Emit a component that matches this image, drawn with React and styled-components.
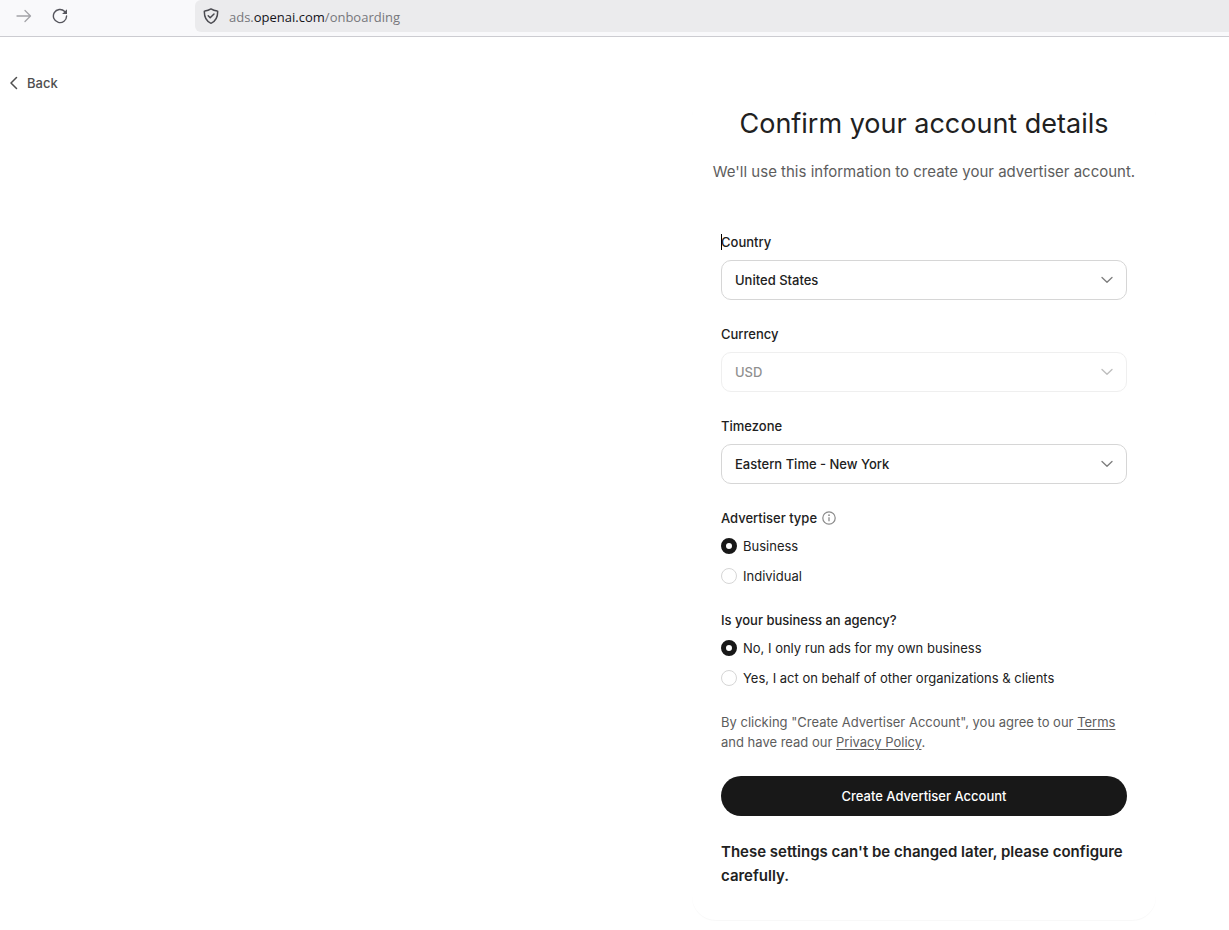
import React, { useState } from "react";
import styled, { createGlobalStyle } from "styled-components";

const GlobalStyle = createGlobalStyle`
  * {
    box-sizing: border-box;
  }
  body {
    margin: 0;
    background: #fff;
    color: #212121;
    font-family: Inter, "Liberation Sans", sans-serif;
    font-size: 13px;
    line-height: 20px;
  }
`;

const ArrowIcon = () => (
  <svg width="16" height="16" viewBox="0 0 16 16" fill="none" stroke="#a3a3a8" strokeWidth="1.3">
    <path d="M1 8h13.5M9 2.5 14.5 8 9 13.5" strokeLinecap="round" strokeLinejoin="round" />
  </svg>
);

const ReloadIcon = () => (
  <svg width="16" height="16" viewBox="0 0 16 16" fill="none">
    <path
      d="M12.7 3.4A6.6 6.6 0 1 0 14.6 8"
      stroke="#55555c"
      strokeWidth="1.4"
      strokeLinecap="round"
    />
    <path d="M15 1.2v4.9h-4.9z" fill="#55555c" />
  </svg>
);

const ShieldIcon = () => (
  <svg width="16" height="16" viewBox="0 0 16 16" fill="none" stroke="#4a4a50" strokeWidth="1.5">
    <path
      d="M8 .9c2 1.2 4.1 1.8 6.2 2.1.3 0 .5.3.5.6 0 5.4-1.7 9.400-6.300 11.500a1 1 0 0 1-.8 0C3 13 1.300 9 1.300 3.600c0-.3.2-.6.5-.6C3.900 2.700 6 2.100 8 .9z"
      strokeLinejoin="round"
    />
    <path d="M5.2 7.8 7.2 9.8 11 6" strokeLinecap="round" strokeLinejoin="round" />
  </svg>
);

const ChevronLeft = () => (
  <svg width="8" height="14" viewBox="0 0 8 14" fill="none" stroke="#4f4f4f" strokeWidth="1.5">
    <path d="M6.5 1.5 1 7l5.500 5.500" strokeLinecap="round" strokeLinejoin="round" />
  </svg>
);

const ChevronDown = () => (
  <svg width="12" height="8" viewBox="0 0 12 8" fill="none" stroke="#7d7d7d" strokeWidth="1.3">
    <path d="M1 1.5 6 6.3 11 1.5" strokeLinecap="round" strokeLinejoin="round" />
  </svg>
);

const InfoIcon = () => (
  <svg width="14" height="14" viewBox="0 0 14 14" fill="none">
    <circle cx="7" cy="7" r="6.2" stroke="#8a8a8a" strokeWidth="1.2" />
    <path d="M7 6.3v4" stroke="#8a8a8a" strokeWidth="1.3" />
    <circle cx="7" cy="4.2" r=".9" fill="#8a8a8a" />
  </svg>
);

const SelectField = ({ id, label, options, disabled, caret }) => (
  <Field>
    <Label htmlFor={id}>
      {caret && <Caret />}
      {label}
    </Label>
    <SelectWrapper $disabled={disabled}>
      <select id={id} disabled={disabled}>
        {options.map((item) => (
          <option key={item}>{item}</option>
        ))}
      </select>
      <ChevronDown />
    </SelectWrapper>
  </Field>
);

const RadioField = ({ name, label, info, options, value, onChange }) => (
  <RadioGroup>
    <Legend>
      {label}
      {info && <InfoIcon />}
    </Legend>
    <RadioList>
      {options.map((item) => (
        <RadioLabel key={item}>
          <Radio
            type="radio"
            name={name}
            checked={value === item}
            onChange={() => onChange(item)}
          />
          {item}
        </RadioLabel>
      ))}
    </RadioList>
  </RadioGroup>
);

const types = ["Business", "Individual"];
const agencyAnswers = [
  "No, I only run ads for my own business",
  "Yes, I act on behalf of other organizations & clients",
];

const App = () => {
  const [type, setType] = useState(types[0]);
  const [agency, setAgency] = useState(agencyAnswers[0]);

  return (
    <>
      <GlobalStyle />
      <Toolbar>
        <ToolButton aria-label="Forward" disabled>
          <ArrowIcon />
        </ToolButton>
        <ToolButton aria-label="Reload">
          <ReloadIcon />
        </ToolButton>
        <AddressBar>
          <ShieldIcon />
          <Address>
            ads.<b>openai.com</b>/onboarding
          </Address>
        </AddressBar>
      </Toolbar>
      <TopNav>
        <BackLink href="#">
          <ChevronLeft />
          Back
        </BackLink>
      </TopNav>
      <Main>
        <Card>
          <Title>Confirm your account details</Title>
          <Subtitle>We'll use this information to create your advertiser account.</Subtitle>
          <Form onSubmit={(e) => e.preventDefault()}>
            <SelectField id="country" label="Country" options={["United States"]} caret />
            <SelectField id="currency" label="Currency" options={["USD"]} disabled />
            <SelectField id="timezone" label="Timezone" options={["Eastern Time - New York"]} />
            <RadioField
              name="type"
              label="Advertiser type"
              info
              options={types}
              value={type}
              onChange={setType}
            />
            <RadioField
              name="agency"
              label="Is your business an agency?"
              options={agencyAnswers}
              value={agency}
              onChange={setAgency}
            />
            <Legal>
              By clicking "Create Advertiser Account", you agree to our <a href="#">Terms</a> and
              have read our <a href="#">Privacy Policy</a>.
            </Legal>
            <SubmitButton type="submit">Create Advertiser Account</SubmitButton>
            <Note>These settings can't be changed later, please configure carefully.</Note>
          </Form>
        </Card>
      </Main>
    </>
  );
};

const Toolbar = styled.header`
  display: flex;
  align-items: flex-start;
  height: 37px;
  padding-left: 6px;
  background: #f9f9fb;
  border-bottom: 1px solid #ccccd1;
`;

const ToolButton = styled.button`
  display: flex;
  align-items: center;
  justify-content: center;
  width: 36px;
  height: 32px;
  padding: 0;
  border: 0;
  background: transparent;
`;

const AddressBar = styled.div`
  display: flex;
  flex: 1;
  align-items: center;
  gap: 10px;
  height: 32px;
  margin-left: 117px;
  padding-left: 8px;
  border-radius: 6px 0 0 6px;
  background: #ebebed;
`;

const Address = styled.span`
  padding-top: 2px;
  color: #77777c;
  font-family: "Open Sans", "Noto Sans", sans-serif;
  font-size: 13px;
  b {
    color: #15141a;
    font-weight: 400;
  }
`;

const TopNav = styled.nav`
  display: flex;
  padding: 36px 10px 0;
`;

const BackLink = styled.a`
  display: flex;
  align-items: center;
  gap: 9px;
  color: #4f4f4f;
  font-weight: 500;
  text-decoration: none;
`;

const Main = styled.main`
  display: flex;
  justify-content: flex-end;
  padding: 0 73px 10px 10px;
`;

const Card = styled.section`
  width: 100%;
  max-width: 464px;
  padding: 13px 0 32px;
  border-radius: 24px;
  box-shadow: 0 1px 1px rgba(0, 0, 0, 0.03);
`;

const Title = styled.h1`
  margin: 0;
  font-size: 27px;
  font-weight: 400;
  line-height: 36px;
  text-align: center;
`;

const Subtitle = styled.p`
  margin: 18px 0 48px;
  color: #5d5d5d;
  font-size: 15px;
  line-height: 24px;
  text-align: center;
`;

const Form = styled.form`
  display: flex;
  flex-direction: column;
  gap: 24px;
  margin: 0 29px;
`;

const Field = styled.div`
  display: flex;
  flex-direction: column;
  gap: 8px;
`;

const Label = styled.label`
  position: relative;
  font-weight: 500;
`;

const Caret = styled.span`
  position: absolute;
  top: 2px;
  left: 0;
  width: 1px;
  height: 16px;
  background: #000;
`;

const SelectWrapper = styled.div`
  position: relative;
  opacity: ${(props) => (props.$disabled ? 0.5 : 1)};
  select {
    width: 100%;
    height: 40px;
    padding: 0 40px 0 13px;
    appearance: none;
    border: 1px solid ${(props) => (props.$disabled ? "#e0e0e0" : "#d6d6d6")};
    border-radius: 10px;
    background: #fff;
    color: #212121;
    font: inherit;
    font-weight: 500;
    opacity: 1;
  }
  svg {
    position: absolute;
    top: 16px;
    right: 14px;
    pointer-events: none;
  }
`;

const RadioGroup = styled.fieldset`
  min-width: 0;
  margin: 0;
  padding: 0;
  border: 0;
`;

const Legend = styled.legend`
  display: flex;
  align-items: center;
  gap: 5px;
  margin-bottom: 8px;
  padding: 0;
  font-weight: 500;
`;

const RadioList = styled.div`
  display: flex;
  flex-direction: column;
  gap: 10px;
`;

const RadioLabel = styled.label`
  display: flex;
  align-items: center;
  gap: 6px;
`;

const Radio = styled.input`
  width: 16px;
  height: 16px;
  margin: 0;
  appearance: none;
  border: 1px solid #d6d6d6;
  border-radius: 50%;
  background: #fff;
  &:checked {
    border: 5px solid #181818;
  }
`;

const Legal = styled.p`
  margin: 0;
  color: #5d5d5d;
  a {
    color: inherit;
    text-underline-offset: 2px;
  }
`;

const SubmitButton = styled.button`
  height: 40px;
  border: 0;
  border-radius: 20px;
  background: #181818;
  color: #fff;
  font: inherit;
  font-weight: 500;
`;

const Note = styled.p`
  margin: 0;
  font-size: 15px;
  font-weight: 600;
  line-height: 24px;
`;

export default App;
